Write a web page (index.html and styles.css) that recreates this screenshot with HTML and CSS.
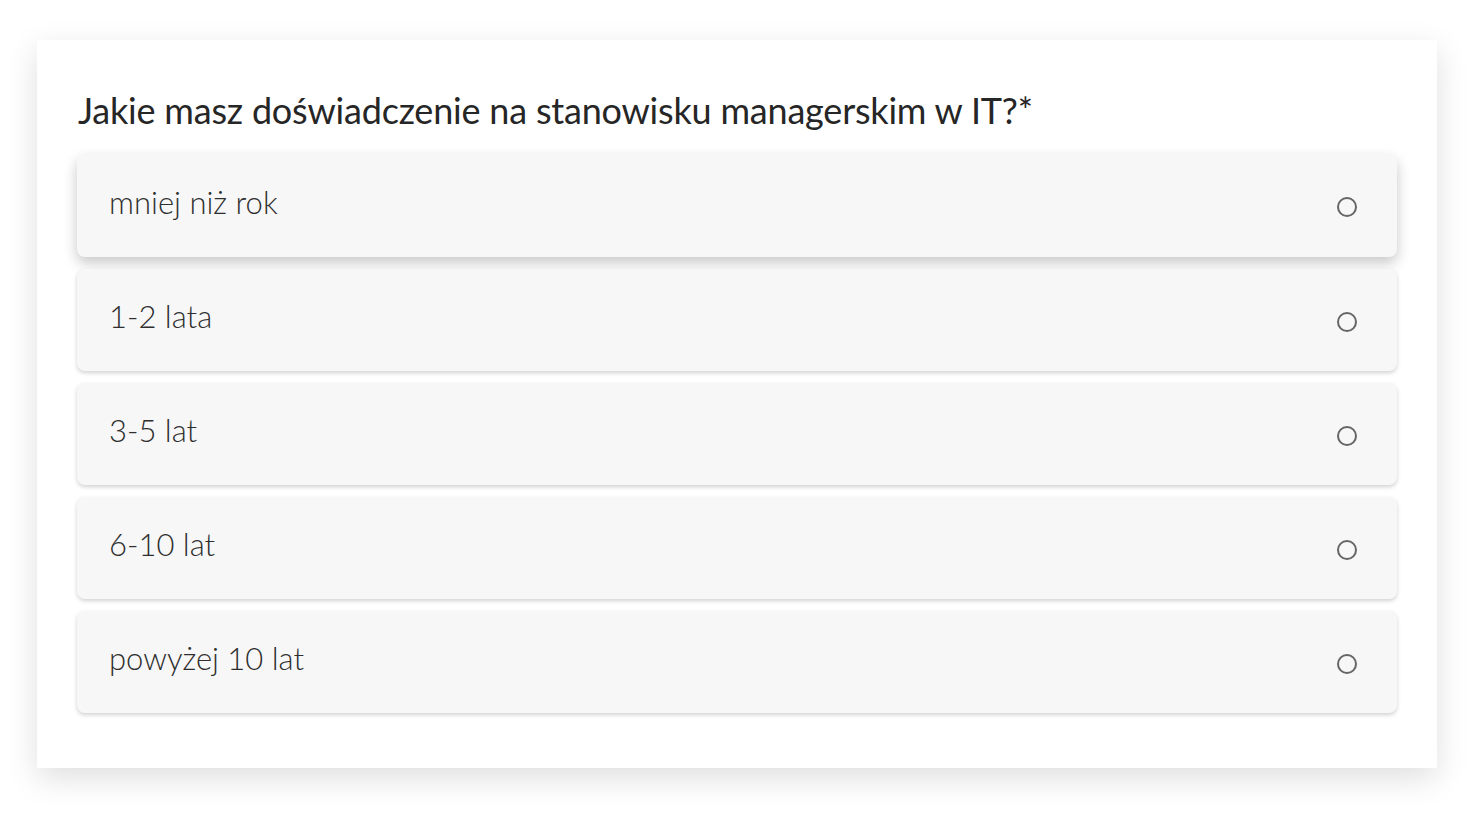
FILE: index.html
```html
<!DOCTYPE html>
<html lang="pl">
<head>
<meta charset="utf-8">
<title>Ankieta</title>
<link rel="stylesheet" href="styles.css">
</head>
<body>
<div class="card">
  <h2 class="question">Jakie masz doświadczenie na stanowisku managerskim w IT?*</h2>
  <div class="options">
    <label class="option option-hover"><span class="text">mniej niż rok</span><span class="radio"></span></label>
    <label class="option"><span class="text">1-2 lata</span><span class="radio"></span></label>
    <label class="option"><span class="text">3-5 lat</span><span class="radio"></span></label>
    <label class="option"><span class="text">6-10 lat</span><span class="radio"></span></label>
    <label class="option"><span class="text">powyżej 10 lat</span><span class="radio"></span></label>
  </div>
</div>
</body>
</html>
```
FILE: styles.css
```css
html, body {
  margin: 0;
  background: #ffffff;
}
body {
  padding: 40px 37px;
  font-family: Lato, "Open Sans", sans-serif;
}
.card {
  width: 1400px;
  height: 728px;
  box-sizing: border-box;
  background: #ffffff;
  padding: 50px 40px 54px 40px;
  box-shadow: 0 10px 30px rgba(0, 0, 0, 0.13);
}
.question {
  margin: 0 0 24px 1px;
  font-size: 36px;
  line-height: 40px;
  font-weight: 400;
  color: #262626;
  letter-spacing: -0.2px;
}
.options {
  display: flex;
  flex-direction: column;
  gap: 12px;
}
.option {
  display: flex;
  align-items: center;
  justify-content: space-between;
  height: 102px;
  box-sizing: border-box;
  padding: 0 40px 0 32px;
  background: #f7f7f7;
  border-radius: 8px;
  box-shadow: 0 2px 4px rgba(0, 0, 0, 0.18);
}
.option-hover {
  height: 103px;
  box-shadow: 0 6px 14px rgba(0, 0, 0, 0.22);
}
.text {
  font-size: 31px;
  font-weight: 300;
  color: #2e2e2e;
  margin-top: -8px;
}
.radio {
  width: 16px;
  height: 16px;
  border: 2px solid #666666;
  border-radius: 50%;
  margin-top: 3px;
}
```
